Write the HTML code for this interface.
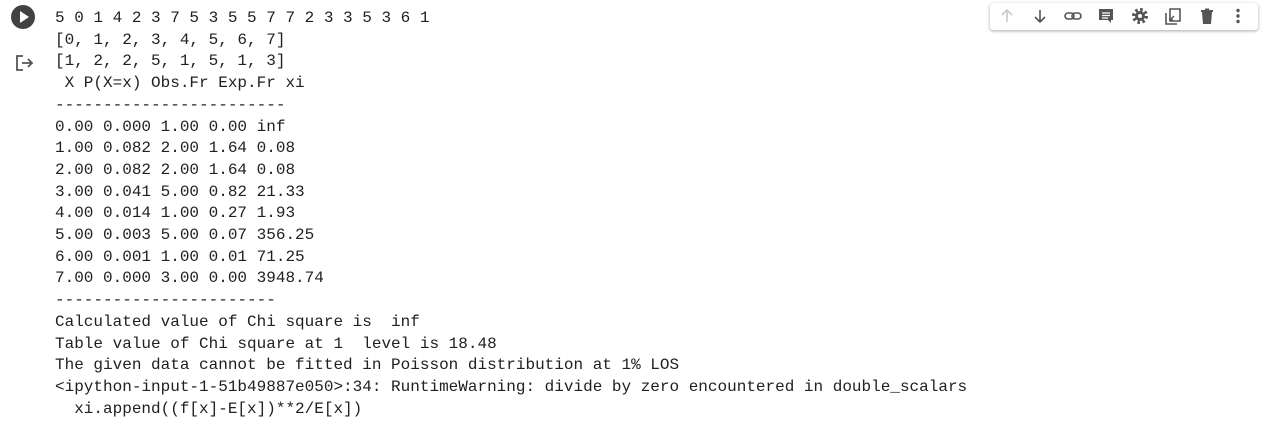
<!DOCTYPE html>
<html><head><style>
body{margin:0;width:1267px;height:429px;background:#fff;overflow:hidden;position:relative;font-family:"Liberation Mono",monospace;}
pre{position:absolute;left:55px;top:8px;margin:0;font-family:"Liberation Mono",monospace;font-size:16px;line-height:21.7px;color:#212121;}
.run{position:absolute;left:11px;top:5px;width:24px;height:24px;border-radius:50%;background:#424242;}
.run:after{content:"";position:absolute;left:9px;top:6px;border-left:9px solid #fff;border-top:6px solid transparent;border-bottom:6px solid transparent;}
.tb{position:absolute;left:990px;top:3px;width:268px;height:27px;background:#fff;border-radius:3px;box-shadow:0 1px 3px rgba(0,0,0,.35);}
.tb svg{position:absolute;top:4px;}
</style></head><body>
<div class="run"></div>
<svg style="position:absolute;left:14px;top:53px" width="22" height="20" viewBox="0 0 22 20"><path d="M9 3H3v14h6" fill="none" stroke="#555" stroke-width="1.8"/><path d="M8 10h10M14 6l4 4-4 4" fill="none" stroke="#555" stroke-width="1.8"/></svg>
<pre>5 0 1 4 2 3 7 5 3 5 5 7 7 2 3 3 5 3 6 1
[0, 1, 2, 3, 4, 5, 6, 7]
[1, 2, 2, 5, 1, 5, 1, 3]
 X P(X=x) Obs.Fr Exp.Fr xi
------------------------
0.00 0.000 1.00 0.00 inf
1.00 0.082 2.00 1.64 0.08
2.00 0.082 2.00 1.64 0.08
3.00 0.041 5.00 0.82 21.33
4.00 0.014 1.00 0.27 1.93
5.00 0.003 5.00 0.07 356.25
6.00 0.001 1.00 0.01 71.25
7.00 0.000 3.00 0.00 3948.74
-----------------------
Calculated value of Chi square is  inf
Table value of Chi square at 1  level is 18.48
The given data cannot be fitted in Poisson distribution at 1% LOS
&lt;ipython-input-1-51b49887e050&gt;:34: RuntimeWarning: divide by zero encountered in double_scalars
  xi.append((f[x]-E[x])**2/E[x])</pre>
<div class="tb">
<svg style="left:8px" width="18" height="18" viewBox="0 0 18 18"><path d="M9 15V3M4 8l5-5 5 5" fill="none" stroke="#c8c8c8" stroke-width="1.6"/></svg>
<svg style="left:41px" width="18" height="18" viewBox="0 0 18 18"><path d="M9 3v12M4 10l5 5 5-5" fill="none" stroke="#555" stroke-width="1.6"/></svg>
<svg style="left:73px" width="20" height="18" viewBox="0 0 20 18"><rect x="2" y="6" width="9" height="6" rx="3" fill="none" stroke="#555" stroke-width="1.6"/><rect x="9" y="6" width="9" height="6" rx="3" fill="none" stroke="#555" stroke-width="1.6"/></svg>
<svg style="left:107px" width="18" height="18" viewBox="0 0 18 18"><path d="M2 2h14v11h-2v3l-3-3H2z" fill="#555"/><path d="M5 6h8M5 8.5h8M5 11h6" stroke="#fff" stroke-width="1.2"/></svg>
<svg style="left:141px" width="18" height="18" viewBox="0 0 18 18"><circle cx="9" cy="9" r="6" fill="none" stroke="#555" stroke-width="4" stroke-dasharray="2.4 2.3"/><circle cx="9" cy="9" r="5" fill="#555"/><circle cx="9" cy="9" r="2" fill="#fff"/></svg>
<svg style="left:174px" width="18" height="18" viewBox="0 0 18 18"><path d="M6 2h10v12H6z M2 6v11h11" fill="none" stroke="#555" stroke-width="1.6"/><path d="M6 13l4-4M6 10v3h3" fill="none" stroke="#555" stroke-width="1.4"/></svg>
<svg style="left:208px" width="18" height="18" viewBox="0 0 18 18"><path d="M4 5h10l-1 12H5z" fill="#555"/><path d="M3 3h12v2H3z M7 1.5h4v2H7z" fill="#555"/></svg>
<svg style="left:243px" width="10" height="18" viewBox="0 0 10 18"><circle cx="5" cy="3.5" r="1.7" fill="#555"/><circle cx="5" cy="9" r="1.7" fill="#555"/><circle cx="5" cy="14.5" r="1.7" fill="#555"/></svg>
</div>
</body></html>
